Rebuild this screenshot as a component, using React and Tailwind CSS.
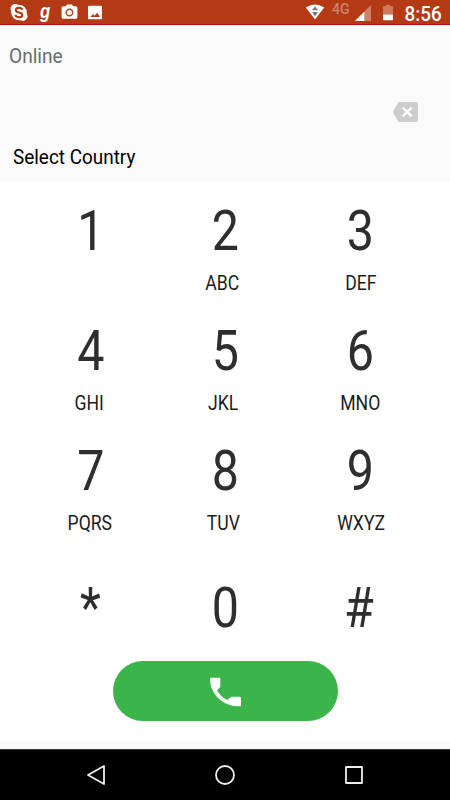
import React from 'react';
import { MdPhotoCamera } from 'react-icons/md';

const KEYS = [
    { digit: '1', letters: '' },
    { digit: '2', letters: 'ABC', shift: '-translate-x-[3px]' },
    { digit: '3', letters: 'DEF', shift: 'translate-x-[1px]' },
    { digit: '4', letters: 'GHI', shift: '-translate-x-[0.5px]' },
    { digit: '5', letters: 'JKL', shift: '-translate-x-[2px]' },
    { digit: '6', letters: 'MNO', shift: 'translate-x-[0.5px]' },
    { digit: '7', letters: 'PQRS', shift: '-translate-x-[0.5px]' },
    { digit: '8', letters: 'TUV', shift: '-translate-x-[1.5px]' },
    { digit: '9', letters: 'WXYZ', shift: 'translate-x-[1px]' },
];

const SYMBOLS = [
    { digit: '*', shift: 'translate-x-[0.5px]' },
    { digit: '0', shift: '' },
    { digit: '#', shift: '-translate-x-[1px]' },
];

const DIGIT_SHIFTS = ['translate-x-[0.5px]', '', ''];

const StatusBar = () => (
    <div className="flex h-[25px] items-center border-b border-[#b90d0d] bg-[#b43a15] text-white">
        <svg className="ml-[10px] h-[18px] w-[18px] translate-y-[0.5px]" viewBox="0 0 18 18">
            <circle cx="9" cy="9" r="7.8" fill="white" />
            <circle cx="5.2" cy="5.2" r="4.7" fill="white" />
            <circle cx="12.8" cy="12.8" r="4.7" fill="white" />
            <path
                d="M12.4 6.3C12 5 10.7 4.4 9 4.4C7.1 4.4 5.8 5.3 5.8 6.7C5.8 8.2 7.2 8.6 9 9C11 9.4 12.3 9.8 12.3 11.4C12.3 12.9 11 13.7 9 13.7C7.1 13.7 5.7 12.9 5.4 11.4"
                fill="none"
                stroke="#b43a15"
                strokeWidth="2.1"
            />
        </svg>
        <span className="ml-[12px] w-[12px] font-['Liberation_Sans',sans-serif] text-[21px] leading-[24px] font-bold italic">
            <span className="inline-block origin-left -translate-y-[1px] scale-x-[0.8]">g</span>
        </span>
        <MdPhotoCamera className="ml-[8px] h-[19px] w-[19px]" />
        <svg className="ml-[9px] h-[14px] w-[14px] translate-y-[0.5px]" viewBox="0 0 14 14">
            <rect width="14" height="14" rx="1.2" fill="white" />
            <path d="M2.5 11.5 5 8.5 6.5 10.2 9.2 7.2 12 11.5Z" fill="#b43a15" />
        </svg>
        <svg className="ml-auto h-[16px] w-[20px]" viewBox="0 0 20 16">
            <path d="M.8 3.5Q10-2.5 19.2 3.5L10 15.5Z" fill="white" />
            <path d="M10 2.2 13 6.3H7ZM7 8h6l-3 4.2Z" fill="#777" />
        </svg>
        <span className="ml-[7px] w-[19px] -translate-y-[3px] text-[14px] leading-none font-medium text-[#d4806a]">4G</span>
        <svg className="ml-[4px] h-[16px] w-[16px] translate-y-px" viewBox="0 0 16 16">
            <path d="M16 0V16H0Z" fill="#cf8069" />
            <path d="M9.3 6.7V16H0Z" fill="white" />
        </svg>
        <svg className="ml-[12px] h-[16px] w-[10px] translate-y-[0.5px]" viewBox="0 0 10 16">
            <path d="M3 0H7V1.5H9.2Q10 1.5 10 2.3V10H0V2.3Q0 1.5 .8 1.5H3Z" fill="#cf7860" />
            <path d="M0 10H10V15.2Q10 16 9.2 16H.8Q0 16 0 15.2Z" fill="white" />
        </svg>
        <span className="mr-[8px] ml-[11px] w-[38px] translate-y-[3px] scale-x-[0.97] text-[19.5px] leading-none font-medium whitespace-nowrap">8:56</span>
    </div>
);

const Header = () => (
    <div className="flex h-[156px] flex-col bg-[#fafafa]">
        <div className="mt-[20px] ml-[8.5px] origin-left scale-x-[0.98] text-[19.5px] leading-[24px] text-[#6c6c6c]">Online</div>
        <button aria-label="Delete" className="mt-[33px] mr-[32px] self-end">
            <svg className="block h-[20px] w-[25px]" viewBox="0 0 25 20">
                <path d="M6.8 0H23Q25 0 25 2V18Q25 20 23 20H6.8Q5.7 20 5 19L.4 11.2Q0 10 .4 8.8L5 1Q5.7 0 6.8 0Z" fill="#cdcdcd" />
                <path d="M9.8 5.5 18.7 14.4M18.7 5.5 9.8 14.4" stroke="white" strokeWidth="2.4" />
            </svg>
        </button>
        <div className="mt-[24px] ml-[12.5px] origin-left scale-x-[0.97] text-[19.5px] leading-[24px] text-black">Select Country</div>
    </div>
);

const Digit = ({ children, shift }) => (
    <span className={shift}>
        <span className="block scale-x-[0.88] text-[55px] leading-[64px] text-[#2e2e2e]">{children}</span>
    </span>
);

const Keypad = () => (
    <div className="mx-auto grid h-[480px] w-[405px] grid-cols-3 grid-rows-[120px_120px_120px_120px] text-center">
        {KEYS.map((key, index) => (
            <button key={key.digit} className="flex flex-col items-center pt-[18px]">
                <Digit shift={DIGIT_SHIFTS[index % 3]}>{key.digit}</Digit>
                <span className={`mt-[8px] ${key.shift || ''}`}>
                    <span className="block scale-x-[0.88] text-[20px] leading-[24px] text-[#1c1c1c]">{key.letters}</span>
                </span>
            </button>
        ))}
        {SYMBOLS.map((key) => (
            <button key={key.digit} className="flex flex-col items-center pt-[35px]">
                <Digit shift={key.shift}>{key.digit}</Digit>
            </button>
        ))}
    </div>
);

const NavBar = () => (
    <div className="grid h-[51px] grid-cols-3 items-center border-t border-[#333] bg-black px-[31px] text-[#eee]">
        <svg className="mx-auto h-[20px] w-[20px]" viewBox="0 0 20 20" fill="none" stroke="currentColor" strokeWidth="1.8" strokeLinejoin="round">
            <path d="M18 1V19L2 10Z" />
        </svg>
        <svg className="mx-auto h-[20px] w-[20px]" viewBox="0 0 20 20" fill="none" stroke="currentColor" strokeWidth="1.8">
            <circle cx="10" cy="10" r="9" />
        </svg>
        <svg className="mx-auto h-[20px] w-[20px]" viewBox="0 0 20 20" fill="none" stroke="currentColor" strokeWidth="1.8" strokeLinejoin="round">
            <rect x="2" y="2" width="16" height="16" />
        </svg>
    </div>
);

export default function App() {
    return (
        <div className="flex h-[800px] w-[450px] flex-col overflow-hidden bg-white font-[Roboto,sans-serif]">
            <StatusBar />
            <Header />
            <Keypad />
            <button aria-label="Call" className="mx-auto flex h-[60px] w-[225px] items-center justify-center rounded-full bg-[#3bb44a] text-white">
                <svg className="h-[29px] w-[31px] translate-y-[0.5px]" viewBox="0 0 31 29" fill="currentColor">
                    <path d="M1.2 0H9.2Q10.3 0 10.3 1.2V8.5Q10.3 9.5 9.6 10.2L7 12.7Q10.5 19.5 17.5 22.6L20.3 19.9Q21 19.2 22 19.2H29.8Q31 19.2 31 20.4V27.8Q31 29 29.8 29C13 29 0 16.5 0 1.2Q0 0 1.2 0Z" />
                </svg>
            </button>
            <div className="mt-auto h-[8px] bg-[#fafafa]" />
            <NavBar />
        </div>
    );
}
